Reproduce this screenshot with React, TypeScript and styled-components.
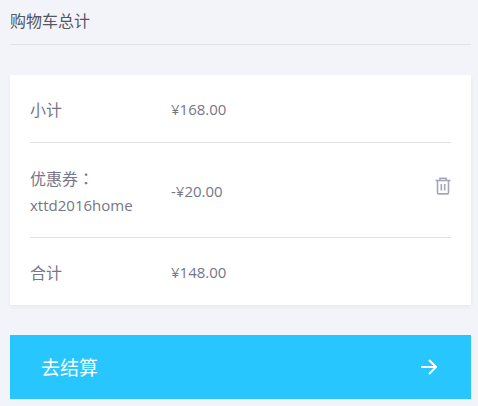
import styled, { createGlobalStyle } from "styled-components";

const GlobalStyle = createGlobalStyle`
  html, body {
    margin: 0;
    padding: 0;
    background: #f3f4f9;
  }
  * {
    box-sizing: border-box;
  }
`;

const Page = styled.div`
  width: 478px;
  height: 406px;
  padding: 0 7px 0 10px;
  overflow: hidden;
  font-family: "Open Sans", "Noto Sans CJK SC", sans-serif;
  color: #757688;
`;

const Heading = styled.div`
  height: 45px;
  padding-bottom: 5px;
  display: flex;
  align-items: center;
  font-size: 16px;
  color: #55565f;
  border-bottom: 1px solid #e1e2e9;
`;

const Card = styled.div`
  margin-top: 30px;
  padding: 0 20px;
  background: #fff;
  box-shadow: 0 2px 4px rgba(40, 50, 90, 0.06);
`;

const Row = styled.div<{ $height: number }>`
  height: ${({ $height }) => $height}px;
  display: grid;
  grid-template-columns: 141px 1fr auto;
  align-items: center;
  border-bottom: 1px solid #dfe0e8;

  &:last-child {
    border-bottom: 0;
  }
`;

const Label = styled.div`
  font-size: 16px;
`;

const CouponLabel = styled.div`
  font-family: "Noto Sans CJK TC", sans-serif;
  font-size: 16px;
  line-height: 28px;
  padding-top: 1px;
`;

const CouponCode = styled.div`
  font-size: 15px;
  line-height: 26px;
`;

const Amount = styled.div<{ $drop?: number }>`
  font-size: 15px;
  padding-top: ${({ $drop }) => $drop ?? 1}px;
`;

const DeleteButton = styled.button`
  width: 16px;
  height: 18px;
  margin-bottom: 8px;
  padding: 0;
  border: 0;
  background: none;
  display: flex;
`;

const Checkout = styled.div`
  margin-top: 30px;
  height: 64px;
  padding: 0 34px 0 31px;
  display: flex;
  align-items: center;
  justify-content: space-between;
  background: #27c6ff;
  color: #fff;
  font-size: 19px;
`;

const App = () => (
  <Page>
    <GlobalStyle />
    <Heading>购物车总计</Heading>
    <Card>
      <Row $height={68}>
        <Label>小计</Label>
        <Amount>¥168.00</Amount>
      </Row>
      <Row $height={95}>
        <div>
          <CouponLabel>优惠券：</CouponLabel>
          <CouponCode>xttd2016home</CouponCode>
        </div>
        <Amount $drop={2}>-¥20.00</Amount>
        <DeleteButton aria-label="删除">
          <svg width="16" height="18" viewBox="0 0 16 18" fill="none" stroke="#a5a6ba" strokeWidth="1.6">
            <path d="M0.5 3.5h15" />
            <path d="M5 3.5V1.2h6v2.3" />
            <path d="M2.5 3.5v12.2c0 .7.5 1.2 1.2 1.2h8.6c.7 0 1.2-.5 1.2-1.2V3.5" />
            <path d="M6.3 7v6.5M9.7 7v6.5" />
          </svg>
        </DeleteButton>
      </Row>
      <Row $height={67}>
        <Label>合计</Label>
        <Amount>¥148.00</Amount>
      </Row>
    </Card>
    <Checkout>
      <span>去结算</span>
      <svg width="16" height="16" viewBox="0 0 16 16" fill="none" stroke="#fff" strokeWidth="2">
        <path d="M0 8h14.5" />
        <path d="M8 1l7 7-7 7" />
      </svg>
    </Checkout>
  </Page>
);

export default App;
